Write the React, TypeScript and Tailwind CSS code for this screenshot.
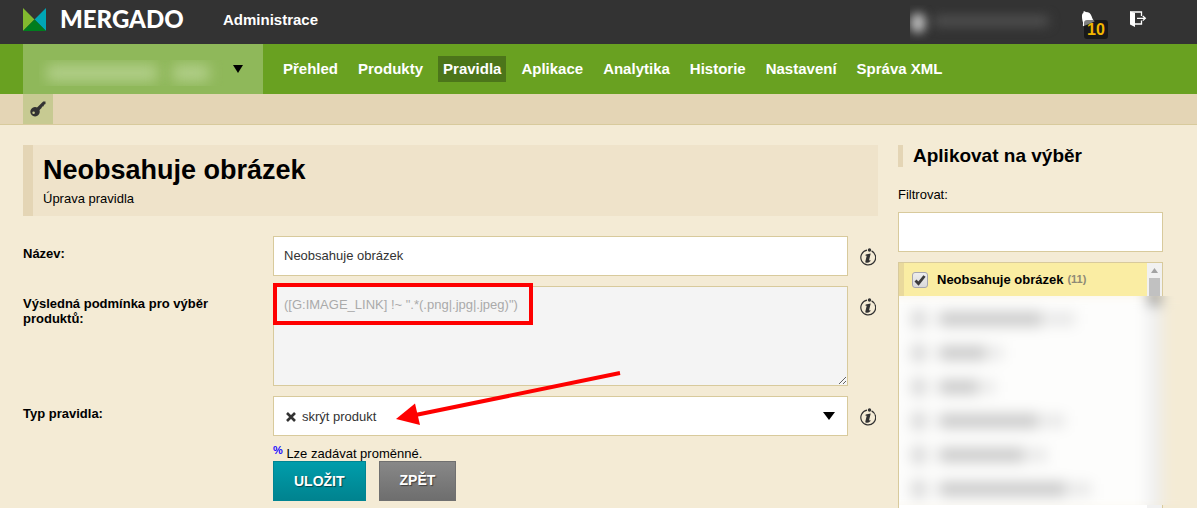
import { useState } from 'react';
import type { ReactNode } from 'react';

const NAV_ITEMS = ['Přehled', 'Produkty', 'Pravidla', 'Aplikace', 'Analytika', 'Historie', 'Nastavení', 'Správa XML'];

// name and count widths of the obscured selections
const HIDDEN_ROWS = [
  { name: 104, count: 28 },
  { name: 48, count: 12 },
  { name: 40, count: 12 },
  { name: 100, count: 22 },
  { name: 86, count: 18 },
  { name: 128, count: 20 },
];

function Logo() {
  return (
    <a href="#" className="flex w-[200px] items-center gap-[14px]">
      <svg width="23" height="23" viewBox="0 0 23 23" aria-hidden="true">
        <path d="M0 0 11.5 11.5 0 23z" fill="#82ba2f" />
        <path d="M23 0 11.5 11.5 23 23z" fill="#00a6b6" />
        <path d="M0 23 11.5 11.5 23 23z" fill="#007d1e" />
      </svg>
      <span className="font-['Lato',sans-serif] text-[24px] leading-6 font-black">MERGADO</span>
    </a>
  );
}

function TopBar() {
  return (
    <header className="flex h-11 items-start bg-[#333333] pr-[50px] pl-[23px] text-white">
      <div className="flex h-[38px] items-center">
        <Logo />
        <a href="#" className="text-[15px] font-bold">Administrace</a>
      </div>
      <div className="ml-auto flex h-[38px] items-center">
        <div className="mt-2 flex h-9 w-[171px] items-center overflow-hidden" aria-hidden="true">
          <span className="h-5 w-4 rounded-full bg-[#b4b4b4] blur-[5px]" />
          <span className="mb-1 ml-2 h-2 w-[114px] bg-[#5a5a5a] blur-[6px]" />
        </div>
        <button type="button" aria-label="Oznámení" className="relative h-4 w-[49px]">
          <svg width="16" height="16" viewBox="0 0 16 16" fill="#fff" aria-hidden="true">
            <path d="M2.400.8c.7-.8 1.700-.6 2.300.2C8 1 9.700 2.600 10.600 5.200c.7 2.200 1.400 3.800 3.200 5L8 13 2 15.200c-.3-1.200.1-2 0-3.700C1.300 9.200.8 6.500 1 4.200 1.200 3 1.600 2.300 2.400 2z" />
          </svg>
          <span className="absolute top-[9px] left-[3px] h-[19px] w-6 rounded-[3px] bg-black/50 text-center text-[16px] leading-[19px] font-bold text-[#f2b600]">
            10
          </span>
        </button>
        <button type="button" aria-label="Odhlásit">
          <svg width="17" height="16" viewBox="0 0 17 16" aria-hidden="true">
            <path d="M0 .5 5 2v14L0 13.500z" fill="#fff" />
            <path d="M0 1h11.500v4M11.500 9.500V13H4" fill="none" stroke="#fff" strokeWidth="1.300" />
            <path d="M7 7.300h8M12.800 5l2.600 2.300-2.600 2.300" fill="none" stroke="#fff" strokeWidth="1.200" />
          </svg>
        </button>
      </div>
    </header>
  );
}

function MainNav() {
  return (
    <div className="flex h-[50px] bg-[#69a121]">
      <button type="button" aria-label="Vybrat projekt" className="ml-[23px] flex w-60 items-center bg-[#8fb85a] pr-5 pl-4">
        <span className="mt-2 flex h-[26px] w-[190px] items-center gap-4 overflow-hidden pl-2">
          <span className="h-4 w-[110px] bg-[#b4d08c] blur-[7px]" />
          <span className="h-4 w-9 bg-[#b4d08c] blur-[7px]" />
        </span>
        <svg className="ml-auto" width="10" height="8" viewBox="0 0 10 8" aria-hidden="true">
          <path d="M0 0h10L5 8z" />
        </svg>
      </button>
      <nav className="ml-[15px] flex items-center gap-[10px] text-[15px] font-bold text-white">
        {NAV_ITEMS.map((item) => (
          <a
            key={item}
            href="#"
            className={item === 'Pravidla' ? 'bg-[#4c751a] px-[5px] leading-[26px]' : 'px-[5px] leading-[26px]'}
          >
            {item}
          </a>
        ))}
      </nav>
    </div>
  );
}

function ToolBar() {
  return (
    <div className="flex h-[31px] border-b border-[#d8ca9c] bg-[#e4d5b5] pl-[23px]">
      <button type="button" aria-label="Klíč" className="flex w-[30px] items-center justify-center bg-[#c7ca92]">
        <svg width="16" height="16" viewBox="0 0 16 16" aria-hidden="true">
          <path d="M13.200.5H15.500V3L14 3.800 13.600 5.200 12 5.700 11.600 7 9.300 9.300 6.600 6.900z" fill="#333" />
          <path
            d="M5 6a4.700 4.700 0 1 0 .1 0zM3.600 10.400a1.300 1.300 0 1 1 0 2.600 1.300 1.300 0 0 1 0-2.600z"
            fill="#333"
            fillRule="evenodd"
          />
        </svg>
      </button>
    </div>
  );
}

function InfoButton() {
  return (
    <button type="button" aria-label="Nápověda" className="mt-3 ml-3 h-[18px] w-[17px]">
      <svg width="16" height="18" viewBox="0 0 16 18" aria-hidden="true">
        <path d="M11.600 2.900A7.400 7.400 0 1 1 7 2.200" fill="none" stroke="#333" strokeWidth="1.200" />
        <circle cx="9.500" cy="2" r="1.700" fill="#333" />
        <path d="M5.700 6.400 10.700 5.400 9 12.600l1.500-.5-.2 1.200c-1.300 1.200-2.600 1.700-3.800 1.500-1-.2-1.300-.8-1.100-1.600L6.700 7.800H5.500z" fill="#333" />
      </svg>
    </button>
  );
}

function Row({ id, label, children }: { id: string; label: string; children: ReactNode }) {
  return (
    <div className="grid grid-cols-[250px_1fr_30px] items-start">
      <label htmlFor={id} className="pt-[10px] pr-10 font-bold">{label}</label>
      <div className="relative">{children}</div>
      <InfoButton />
    </div>
  );
}

function RuleForm() {
  const [name, setName] = useState('Neobsahuje obrázek');

  return (
    <form className="mt-5 flex flex-col gap-[10px]" onSubmit={(e) => e.preventDefault()}>
      <Row id="name" label="Název:">
        <input
          id="name"
          value={name}
          onChange={(e) => setName(e.target.value)}
          className="block h-10 w-full border border-[#d8ca9c] bg-white px-[10px] pb-[2px] text-[#333]"
        />
      </Row>

      <Row id="condition" label="Výsledná podmínka pro výběr produktů:">
        <textarea
          id="condition"
          readOnly
          value={'([G:IMAGE_LINK] !~ ".*(.png|.jpg|.jpeg)")'}
          className="block h-[100px] w-full border border-[#d8ca9c] bg-[#f4f4f4] p-[10px] text-[#aaa]"
        />
        {/* highlight around the condition */}
        <div className="pointer-events-none absolute top-[-3px] left-0 h-[42px] w-[260px] border-4 border-[#fe0000]" />
      </Row>

      <Row id="type" label="Typ pravidla:">
        <select
          id="type"
          className="block h-10 w-full appearance-none border border-[#d8ca9c] bg-white pl-7 text-[#333]"
        >
          <option>skrýt produkt</option>
        </select>
        <svg className="pointer-events-none absolute top-4 left-[13px]" width="10" height="10" viewBox="0 0 10 10">
          <path d="m1 1 8 8M9 1 1 9" stroke="#333" strokeWidth="2.600" />
        </svg>
        <svg className="pointer-events-none absolute top-4 right-[13px]" width="12" height="8" viewBox="0 0 12 8">
          <path d="M0 0h12L6 8z" />
        </svg>
        {/* arrow pointing at the chosen type */}
        <svg
          className="pointer-events-none absolute -top-7 left-[120px]"
          width="232"
          height="60"
          viewBox="0 0 232 60"
          aria-hidden="true"
        >
          <path d="M20 47.500 227 5" stroke="#fe0000" strokeWidth="4" />
          <path d="M3 51 22 35.500 27 57z" fill="#fe0000" />
        </svg>
      </Row>

      <div className="pl-[250px]">
        <p className="h-[15px]">
          <span className="relative -top-1 text-[11px] font-bold text-[#1a0dff]">%</span> Lze zadávat proměnné.
        </p>
        <div className="flex gap-[13px] text-[14px] font-bold text-white">
          <button
            type="submit"
            className="h-10 border border-[#008593] bg-linear-to-b from-[#009dab] to-[#00838f] px-5 text-shadow-[1px_1px_1px_rgb(0_0_0/0.5)]"
          >
            ULOŽIT
          </button>
          <button
            type="button"
            className="h-10 border border-[#707070] bg-linear-to-b from-[#888888] to-[#6e6e6e] px-5 pb-[2px] text-shadow-[1px_1px_1px_rgb(0_0_0/0.5)]"
          >
            ZPĚT
          </button>
        </div>
      </div>
    </form>
  );
}

function HiddenSelections() {
  return (
    <div className="absolute top-[33px] right-[-18px] left-0 h-[209px] overflow-hidden bg-[#f4ebd5]" aria-hidden="true">
      <div className="-mt-1 flex h-[220px] blur-[7px]">
        <div className="-ml-5 flex-1 bg-[#fdfdfc] pt-[10px] pl-[32px]">
          {HIDDEN_ROWS.map((row, i) => (
            <div key={i} className="flex h-[34px] items-center">
              <span className="h-[18px] w-4 bg-[#dadada]" />
              <span className="ml-3 h-[14px] bg-[#c8c8c8]" style={{ width: row.name }} />
              <span className="ml-1 h-3 bg-[#e4e4e4]" style={{ width: row.count }} />
            </div>
          ))}
        </div>
        <div className="w-[15px] bg-[#efefef] px-[2px]">
          <div className="h-3 bg-[#777]" />
        </div>
        <div className="-mr-5 w-[38px] bg-[#f4ebd5]" />
      </div>
    </div>
  );
}

function SelectionPanel() {
  const [filter, setFilter] = useState('');
  const [checked, setChecked] = useState(true);

  return (
    <aside className="w-[265px] shrink-0">
      <h2 className="border-l-[5px] border-[#e4d5b5] pl-[10px] text-[19px] leading-[22px] font-bold">
        Aplikovat na výběr
      </h2>
      <label htmlFor="filter" className="mt-5 block">Filtrovat:</label>
      <input
        id="filter"
        value={filter}
        onChange={(e) => setFilter(e.target.value)}
        className="mt-[10px] block h-10 w-full border border-[#d8ca9c] bg-white px-[10px]"
      />
      <div className="relative mt-[10px] flex h-[300px] items-start border border-[#d8ca9c] bg-white">
        <label className="flex h-[33px] flex-1 items-center border-l-[5px] border-[#e9d99c] bg-[#faeda3] pl-2 font-bold">
          <span className="relative h-4 w-4">
            <input
              type="checkbox"
              checked={checked}
              onChange={(e) => setChecked(e.target.checked)}
              className="block h-4 w-4 appearance-none rounded-[3px] border border-[#a5a5b0] bg-linear-to-b from-[#eeeeee] to-[#dadada]"
            />
            {checked && (
              <svg className="pointer-events-none absolute inset-0" width="16" height="16" viewBox="0 0 16 16">
                <path d="m3.500 8.500 3 3.200L12.500 4" fill="none" stroke="#3c3c3c" strokeWidth="2.800" />
              </svg>
            )}
          </span>
          <span className="ml-[9px]">Neobsahuje obrázek</span>
          <span className="ml-1 text-[11px] text-[#8e8a76]">(11)</span>
        </label>
        <div className="flex h-full w-[15px] flex-col items-center bg-[#f1f1f1]" aria-hidden="true">
          <svg className="my-[5px] h-[5px] w-[7px] shrink-0" viewBox="0 0 7 5">
            <path d="M0 5h7L3.500 0z" fill="#a3a3a3" />
          </svg>
          <div className="h-8 w-[11px] bg-[#c1c1c1]" />
        </div>
        <HiddenSelections />
      </div>
    </aside>
  );
}

export default function App() {
  return (
    <div className="h-screen overflow-hidden bg-[#f4ebd5] font-['Liberation_Sans',Arial,sans-serif] text-[13px] leading-[15px] text-black">
      <TopBar />
      <MainNav />
      <ToolBar />
      <div className="flex gap-5 pt-5 pr-[34px] pl-[23px]">
        <main className="min-w-0 flex-1">
          <div className="h-[71px] border-l-[10px] border-[#e4d5b5] bg-[#efe3ca] px-[10px] pt-[10px]">
            <h1 className="text-[27px] leading-[30px] font-bold">Neobsahuje obrázek</h1>
            <p className="mt-[6px]">Úprava pravidla</p>
          </div>
          <RuleForm />
        </main>
        <SelectionPanel />
      </div>
    </div>
  );
}
